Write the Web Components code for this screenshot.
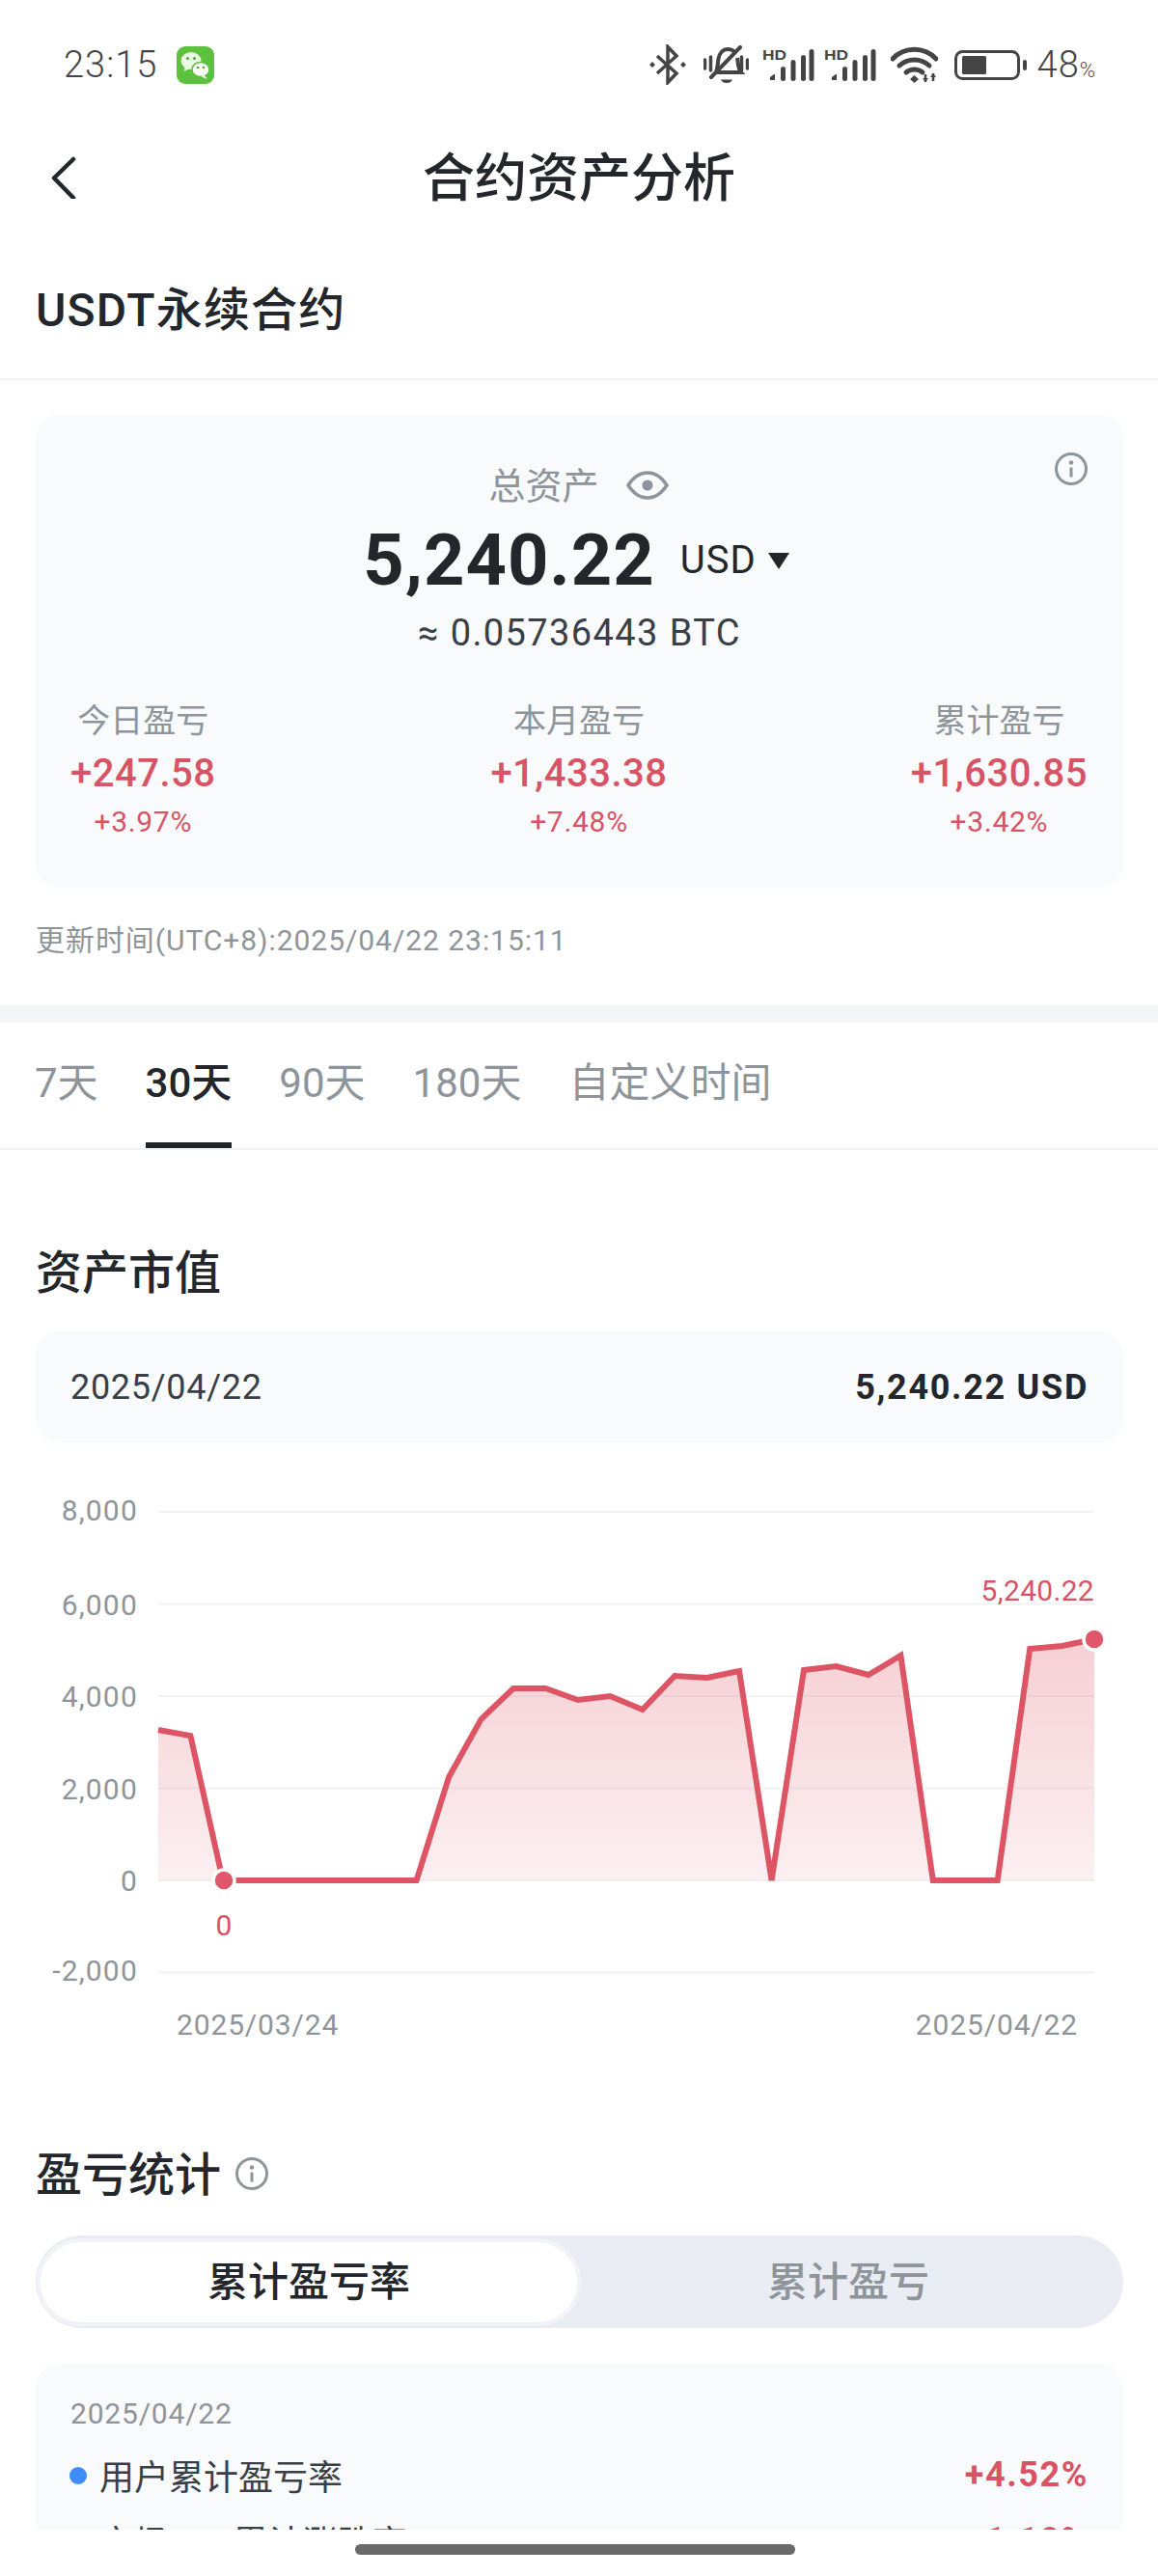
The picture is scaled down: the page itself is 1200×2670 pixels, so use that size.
<!DOCTYPE html>
<html lang="zh-CN">
<head>
<meta charset="utf-8">
<title>合约资产分析</title>
<style>
    html, body { margin: 0; padding: 0; background: #fff; }
    body {
        width: 1200px;
        height: 2670px;
        overflow: hidden;
        font-family: Roboto, "Noto Sans CJK SC", sans-serif;
        color: #23262b;
    }
</style>
</head>
<body>
<app-screen>
    <status-bar></status-bar>
    <nav-header>合约资产分析</nav-header>
    <sub-header>USDT永续合约</sub-header>
    <asset-card>
        <stat-item label="今日盈亏" value="+247.58" pct="+3.97%"></stat-item>
        <stat-item label="本月盈亏" value="+1,433.38" pct="+7.48%"></stat-item>
        <stat-item label="累计盈亏" value="+1,630.85" pct="+3.42%"></stat-item>
    </asset-card>
    <update-time>更新时间(UTC+8):2025/04/22 23:15:11</update-time>
    <band-divider></band-divider>
    <period-tabs></period-tabs>
    <section-title style="margin-top:88px">资产市值</section-title>
    <date-bar date="2025/04/22" value="5,240.22 USD"></date-bar>
    <area-chart></area-chart>
    <section-title style="margin-top:85px" info>盈亏统计</section-title>
    <segment-toggle first="累计盈亏率" second="累计盈亏"></segment-toggle>
    <detail-card date="2025/04/22">
        <detail-row label="用户累计盈亏率" value="+4.52%" dot="#3f8cff"></detail-row>
        <detail-row label="市场BTC累计涨跌率" value="+1.10%" style="margin-top:18px"></detail-row>
    </detail-card>
</app-screen>

<script>
const INFO_SVG = `<svg width="36" height="36" viewBox="0 0 36 36" fill="none"><circle cx="18" cy="18" r="15.5" stroke="#8e9499" stroke-width="3"/><circle cx="18" cy="11.5" r="2.2" fill="#8e9499"/><path d="M18 16.5v10" stroke="#8e9499" stroke-width="3"/></svg>`;

class AppScreen extends HTMLElement {
    constructor() {
        super();
        this.attachShadow({ mode: "open" }).innerHTML = `
        <style>
            :host { display: flex; flex-direction: column; width: 1200px; height: 2670px; background: #fff; }
            .main { flex: 1; min-height: 0; overflow: hidden; display: flex; flex-direction: column; }
            .home { flex: 0 0 48px; display: flex; justify-content: center; padding: 15px 8px 0 0; box-sizing: border-box; }
            .home i { display: block; width: 456px; height: 11px; border-radius: 6px; background: #6a6a6a; }
        </style>
        <div class="main"><slot></slot></div>
        <div class="home"><i></i></div>`;
    }
}

class SignalIcon extends HTMLElement {
    constructor() {
        super();
        this.attachShadow({ mode: "open" }).innerHTML = `
        <style>
            :host { display: block; width: 54px; height: 42px; }
            svg { display: block; }
            text { font: 700 15px "Liberation Sans", sans-serif; fill: #444; }
        </style>
        <svg width="54" height="42" viewBox="0 -4 54 42">
            <text x="0" y="12" textLength="25" lengthAdjust="spacingAndGlyphs">HD</text>
            <path d="M8 33v-3l4-3h1v6z" fill="#444"/>
            <g stroke="#444" stroke-width="5" stroke-linecap="round">
                <path d="M21.500 31.500v-10"/><path d="M32 31.500v-17"/><path d="M42.500 31.500v-22"/><path d="M51 31.500v-28"/>
            </g>
        </svg>`;
    }
}

class StatusBar extends HTMLElement {
    constructor() {
        super();
        this.attachShadow({ mode: "open" }).innerHTML = `
        <style>
            :host { display: flex; align-items: center; height: 134px; padding: 0 65px 0 66px; box-sizing: border-box; color: #444; flex: none; }
            .time { font-size: 38px; font-weight: 300; letter-spacing: 1px; }
            .wx { margin-left: 20px; display: block; }
            .right { margin-left: auto; display: flex; align-items: center; }
            .pct { display: flex; align-items: baseline; font-size: 38px; font-weight: 300; margin-left: 11px; letter-spacing: 1px; }
            .pct small { font-size: 22px; letter-spacing: 0; }
            svg { display: block; }
        </style>
        <span class="time">23:15</span>
        <svg class="wx" width="39" height="39" viewBox="0 0 39 39">
            <rect width="39" height="39" rx="9" fill="#5cc23e"/>
            <ellipse cx="15" cy="15" rx="10.500" ry="9" fill="#eaf8e4"/>
            <path d="M9 21l-1.500 5 6-3z" fill="#eaf8e4"/>
            <ellipse cx="25" cy="24" rx="9" ry="7.500" fill="#fff" stroke="#5cc23e" stroke-width="1.500"/>
            <path d="M29 30l2.500 4-6-2.500z" fill="#fff"/>
            <circle cx="11.500" cy="12.500" r="1.500" fill="#4aa52f"/><circle cx="18.500" cy="12.500" r="1.500" fill="#4aa52f"/>
            <circle cx="22" cy="22" r="1.300" fill="#4aa52f"/><circle cx="28" cy="22" r="1.300" fill="#4aa52f"/>
        </svg>
        <div class="right">
            <svg width="40" height="42" viewBox="0 0 40 42" fill="none" stroke="#444" stroke-width="3.500" stroke-linejoin="miter">
                <path d="M9 12l20 18-9 9.500V2.500l9 9.500L9 30"/>
                <path d="M4 18l3 3-3 3-3-3zM36 18l3 3-3 3-3-3z" fill="#444" stroke="none"/>
            </svg>
            <svg style="margin-left:17px" width="47" height="40" viewBox="0 0 47 40" fill="none" stroke="#444" stroke-width="4">
                <path d="M1.500 15v9M7.500 12v14M39.500 12v14M45.500 15v9" stroke-width="3.500" stroke-linecap="round"/>
                <path d="M13 27c2-3 1.500-8 2.500-13 1-6 5-10 10-10 3 0 5 1 7 3"/>
                <path d="M35 13c1 5 .5 11 4 15H13"/>
                <path d="M38 2L8 33" stroke-linecap="round"/>
                <path d="M18 35.500h12c-1 2.500-3 3.500-6 3.500s-5-1-6-3.500z" fill="#444" stroke="none"/>
            </svg>
            <signal-icon style="margin-left:14px"></signal-icon>
            <signal-icon style="margin-left:10px"></signal-icon>
            <svg style="margin-left:15px" width="49" height="38" viewBox="0 0 49 38" fill="none" stroke="#444" stroke-width="5">
                <path d="M2 13C14 0 35 0 47 13" stroke-linecap="round"/>
                <path d="M9 20c9-8 22-8 31 0" stroke-linecap="round"/>
                <path d="M16 27c5-4 12-4 17 0" stroke-linecap="round"/>
                <path d="M24.500 30l4.500 4-4.500 4-4.500-4z" fill="#444" stroke="none"/>
                <path d="M36 29v8M44 28v8" stroke-width="2.500"/>
                <path d="M33 33l3 4 3-4zM41 32l3-4 3 4z" fill="#444" stroke="none"/>
            </svg>
            <svg style="margin-left:17px" width="75" height="31" viewBox="0 0 75 31">
                <rect x="1.500" y="1.500" width="65" height="28" rx="7" fill="none" stroke="#444" stroke-width="3"/>
                <rect x="8" y="6" width="25" height="19" rx="1.500" fill="#444"/>
                <rect x="71" y="10" width="4" height="11" rx="2" fill="#444"/>
            </svg>
            <span class="pct">48<small>%</small></span>
        </div>`;
    }
}

class NavHeader extends HTMLElement {
    constructor() {
        super();
        this.attachShadow({ mode: "open" }).innerHTML = `
        <style>
            :host { display: flex; position: relative; align-items: center; justify-content: center; height: 98px; font-size: 54px; font-weight: 500; flex: none; }
            span { padding-bottom: 6px; }
            svg { position: absolute; left: 50px; top: 28px; }
        </style>
        <svg width="32" height="44" viewBox="0 0 32 44" fill="none"><path d="M26 3L6 22.500 26 43" stroke="#23262b" stroke-width="4.500" stroke-linecap="round" stroke-linejoin="round"/></svg>
        <span><slot></slot></span>`;
    }
}

class SubHeader extends HTMLElement {
    constructor() {
        super();
        this.attachShadow({ mode: "open" }).innerHTML = `
        <style>
            :host { display: block; height: 162px; padding: 55px 37px 0; box-sizing: border-box; border-bottom: 2px solid #f2f3f5; font-size: 48px; font-weight: 500; line-height: 70px; letter-spacing: 1.2px; flex: none; }
        </style>
        <slot></slot>`;
    }
}

class AssetCard extends HTMLElement {
    constructor() {
        super();
        this.attachShadow({ mode: "open" }).innerHTML = `
        <style>
            :host { display: block; position: relative; margin: 36px 36px 0 37px; height: 490px; padding: 48px 36px 0; box-sizing: border-box; background: #f8fafc; border-radius: 24px; text-align: center; flex: none; }
            .info { position: absolute; top: 38px; right: 36px; line-height: 0; }
            .label { display: flex; justify-content: center; align-items: center; gap: 28px; height: 50px; font-size: 38px; color: #8e9499; padding-right: 2px; }
            .label span { padding-bottom: 5px; }
            .amount { display: flex; justify-content: center; align-items: center; margin-top: 15px; height: 76px; line-height: 76px; padding-right: 7px; }
            .num { font-size: 74px; font-weight: 700; letter-spacing: 1px; }
            .unit { margin-left: 26px; font-size: 40px; letter-spacing: 1px; display: flex; align-items: center; }
            .unit i { margin-left: 12px; width: 0; height: 0; border-left: 11px solid transparent; border-right: 11px solid transparent; border-top: 17px solid #23262b; }
            .btc { margin-top: 12px; height: 50px; line-height: 50px; font-size: 38px; color: #3a3f47; letter-spacing: 1.4px; }
            .stats { display: grid; grid-template-columns: 1fr auto 1fr; margin-top: 44px; padding-right: 1px; }
            ::slotted(stat-item:first-child) { justify-self: start; }
            ::slotted(stat-item:last-child) { justify-self: end; }
        </style>
        <div class="info">${INFO_SVG}</div>
        <div class="label"><span>总资产</span>
            <svg width="44" height="30" viewBox="0 0 44 30" fill="none"><path d="M2 15C8 5.500 14 2 22 2s14 3.500 20 13c-6 9.500-12 13-20 13S8 24.500 2 15z" stroke="#8e9499" stroke-width="3.500"/><circle cx="22" cy="15" r="5.500" fill="#8e9499"/></svg>
        </div>
        <div class="amount"><span class="num">5,240.22</span><span class="unit">USD<i></i></span></div>
        <div class="btc">≈ 0.05736443 BTC</div>
        <div class="stats"><slot></slot></div>`;
    }
}

class StatItem extends HTMLElement {
    connectedCallback() {
        this.attachShadow({ mode: "open" }).innerHTML = `
        <style>
            :host { display: block; text-align: center; }
            .l { height: 44px; line-height: 44px; font-size: 34px; color: #8e9499; }
            .v { margin-top: 8px; height: 50px; line-height: 50px; font-size: 40px; font-weight: 500; color: #d85465; letter-spacing: .5px; }
            .p { margin-top: 5px; height: 40px; line-height: 40px; font-size: 30px; color: #d85465; letter-spacing: .7px; }
        </style>
        <div class="l">${this.getAttribute("label")}</div>
        <div class="v">${this.getAttribute("value")}</div>
        <div class="p">${this.getAttribute("pct")}</div>`;
    }
}

class UpdateTime extends HTMLElement {
    constructor() {
        super();
        this.attachShadow({ mode: "open" }).innerHTML = `
        <style>
            :host { display: block; margin: 33px 37px 0; height: 44px; line-height: 44px; font-size: 30px; color: #8e9499; letter-spacing: .95px; flex: none; }
        </style>
        <slot></slot>`;
    }
}

class BandDivider extends HTMLElement {
    constructor() {
        super();
        this.attachShadow({ mode: "open" }).innerHTML = `
        <style>
            :host { display: block; margin-top: 45px; height: 18px; background: #f4f5f6; flex: none; }
        </style>`;
    }
}

class PeriodTabs extends HTMLElement {
    constructor() {
        super();
        const tabs = ["7天", "30天", "90天", "180天", "自定义时间"];
        this.attachShadow({ mode: "open" }).innerHTML = `
        <style>
            :host { display: flex; gap: 49px; height: 132px; padding: 0 36px; box-sizing: border-box; border-bottom: 2px solid #f2f3f5; flex: none; }
            .t { height: 130px; box-sizing: border-box; padding-top: 33px; line-height: 60px; font-size: 42px; color: #8e9499; }
            .t.on { color: #23262b; font-weight: 500; border-bottom: 6px solid #23262b; }
        </style>
        ${tabs.map((t, i) => `<div class="t${i === 1 ? " on" : ""}">${t}</div>`).join("")}`;
    }
}

class SectionTitle extends HTMLElement {
    connectedCallback() {
        const info = this.hasAttribute("info") ? `<span class="i">${INFO_SVG}</span>` : "";
        this.attachShadow({ mode: "open" }).innerHTML = `
        <style>
            :host { display: flex; align-items: center; margin-left: 37px; height: 70px; font-size: 48px; font-weight: 500; flex: none; }
            .i { margin-left: 14px; line-height: 0; padding-top: 6px; }
        </style>
        <slot></slot>${info}`;
    }
}

class DateBar extends HTMLElement {
    connectedCallback() {
        this.attachShadow({ mode: "open" }).innerHTML = `
        <style>
            :host { display: flex; align-items: center; justify-content: space-between; margin: 30px 36px 0 37px; height: 115px; padding: 0 36px; box-sizing: border-box; background: #f8fafc; border-radius: 24px; font-size: 36px; flex: none; }
            b { font-weight: 700; letter-spacing: 1.7px; }
            span { color: #3a3f47; letter-spacing: .7px; }
        </style>
        <span>${this.getAttribute("date")}</span><b>${this.getAttribute("value")}</b>`;
    }
}

class AreaChart extends HTMLElement {
    constructor() {
        super();
        const ys = [1793, 1799, 1949, 1949, 1949, 1949, 1949, 1949, 1949, 1842, 1782, 1750, 1750, 1762, 1758,
            1772, 1737, 1739, 1732, 1949, 1731, 1727, 1736, 1716, 1949, 1949, 1949, 1709, 1706, 1699];
        const pts = ys.map((y, i) => `${(164 + 33.45 * i).toFixed(1)},${y}`).join(" ");
        const grid = [[1567, "8,000", 9], [1662.5, "6,000", 11], [1758, "4,000", 11], [1853.5, "2,000", 11], [1949, "0", 11], [2044.5, "-2,000", 8]];
        this.attachShadow({ mode: "open" }).innerHTML = `
        <style>
            :host { display: block; height: 635px; flex: none; }
            svg { display: block; }
            text { font-family: Roboto, sans-serif; font-size: 30px; fill: #8e9499; letter-spacing: .85px; }
            text.axis { letter-spacing: 1.2px; }
            text.red { fill: #d85465; letter-spacing: .3px; }
        </style>
        <svg width="1200" height="635" viewBox="0 1495 1200 635">
            <defs>
                <linearGradient id="area" x1="0" y1="0" x2="0" y2="1">
                    <stop offset="0" stop-color="#dd5565" stop-opacity=".28"/>
                    <stop offset="1" stop-color="#dd5565" stop-opacity=".09"/>
                </linearGradient>
            </defs>
            ${grid.map(g => `<path d="M164 ${g[0]}H1134" stroke="#f1f2f4" stroke-width="2"/><text class="axis" x="143" y="${g[0] + g[2]}" text-anchor="end">${g[1]}</text>`).join("")}
            <polygon points="164,1949 ${pts} 1134,1949" fill="url(#area)"/>
            <polyline points="${pts}" fill="none" stroke="#dd5565" stroke-width="6"/>
            <circle cx="232" cy="1949" r="11" fill="#e0566a" stroke="#fff" stroke-width="3.500"/>
            <circle cx="1134" cy="1699" r="11" fill="#e0566a" stroke="#fff" stroke-width="3.500"/>
            <text class="red" x="232" y="2006" text-anchor="middle">0</text>
            <text class="red" x="1134" y="1659" text-anchor="end">5,240.22</text>
            <text x="183" y="2109">2025/03/24</text>
            <text x="1117" y="2109" text-anchor="end">2025/04/22</text>
        </svg>`;
    }
}

class SegmentToggle extends HTMLElement {
    connectedCallback() {
        this.attachShadow({ mode: "open" }).innerHTML = `
        <style>
            :host { display: flex; margin: 32px 36px 0 37px; height: 96px; padding: 7px 0 6px 5px; box-sizing: border-box; background: #e9ecf2; border-radius: 48px; font-size: 42px; flex: none; }
            .on { flex: 0 0 556px; display: flex; align-items: center; justify-content: center; background: #fff; border-radius: 42px; font-weight: 500; box-shadow: 0 0 0 4px #f1f3f6; padding-bottom: 8px; box-sizing: border-box; }
            .off { flex: 1; display: flex; align-items: center; justify-content: center; color: #8e9499; font-weight: 500; padding: 0 4px 8px 0; }
        </style>
        <div class="on">${this.getAttribute("first")}</div>
        <div class="off">${this.getAttribute("second")}</div>`;
    }
}

class DetailCard extends HTMLElement {
    connectedCallback() {
        this.attachShadow({ mode: "open" }).innerHTML = `
        <style>
            :host { display: block; margin: 37px 36px 0 37px; padding: 30px 36px 30px 36px; background: #f8fafc; border-radius: 24px; flex: none; }
            .d { height: 44px; line-height: 44px; font-size: 30px; color: #8e9499; margin-bottom: 16px; letter-spacing: .8px; }
        </style>
        <div class="d">${this.getAttribute("date")}</div>
        <slot></slot>`;
    }
}

class DetailRow extends HTMLElement {
    connectedCallback() {
        const dot = this.getAttribute("dot");
        this.attachShadow({ mode: "open" }).innerHTML = `
        <style>
            :host { display: flex; align-items: center; height: 50px; font-size: 36px; color: #3a3f47; padding-left: 30px; position: relative; }
            i { position: absolute; left: -1px; top: 17px; width: 18px; height: 18px; border-radius: 50%; }
            b { margin-left: auto; font-weight: 700; color: #d85465; letter-spacing: 1.6px; }
        </style>
        ${dot ? `<i style="background:${dot}"></i>` : ""}
        <span>${this.getAttribute("label")}</span><b>${this.getAttribute("value")}</b>`;
    }
}

customElements.define("app-screen", AppScreen);
customElements.define("signal-icon", SignalIcon);
customElements.define("status-bar", StatusBar);
customElements.define("nav-header", NavHeader);
customElements.define("sub-header", SubHeader);
customElements.define("asset-card", AssetCard);
customElements.define("stat-item", StatItem);
customElements.define("update-time", UpdateTime);
customElements.define("band-divider", BandDivider);
customElements.define("period-tabs", PeriodTabs);
customElements.define("section-title", SectionTitle);
customElements.define("date-bar", DateBar);
customElements.define("area-chart", AreaChart);
customElements.define("segment-toggle", SegmentToggle);
customElements.define("detail-card", DetailCard);
customElements.define("detail-row", DetailRow);
</script>
</body>
</html>
